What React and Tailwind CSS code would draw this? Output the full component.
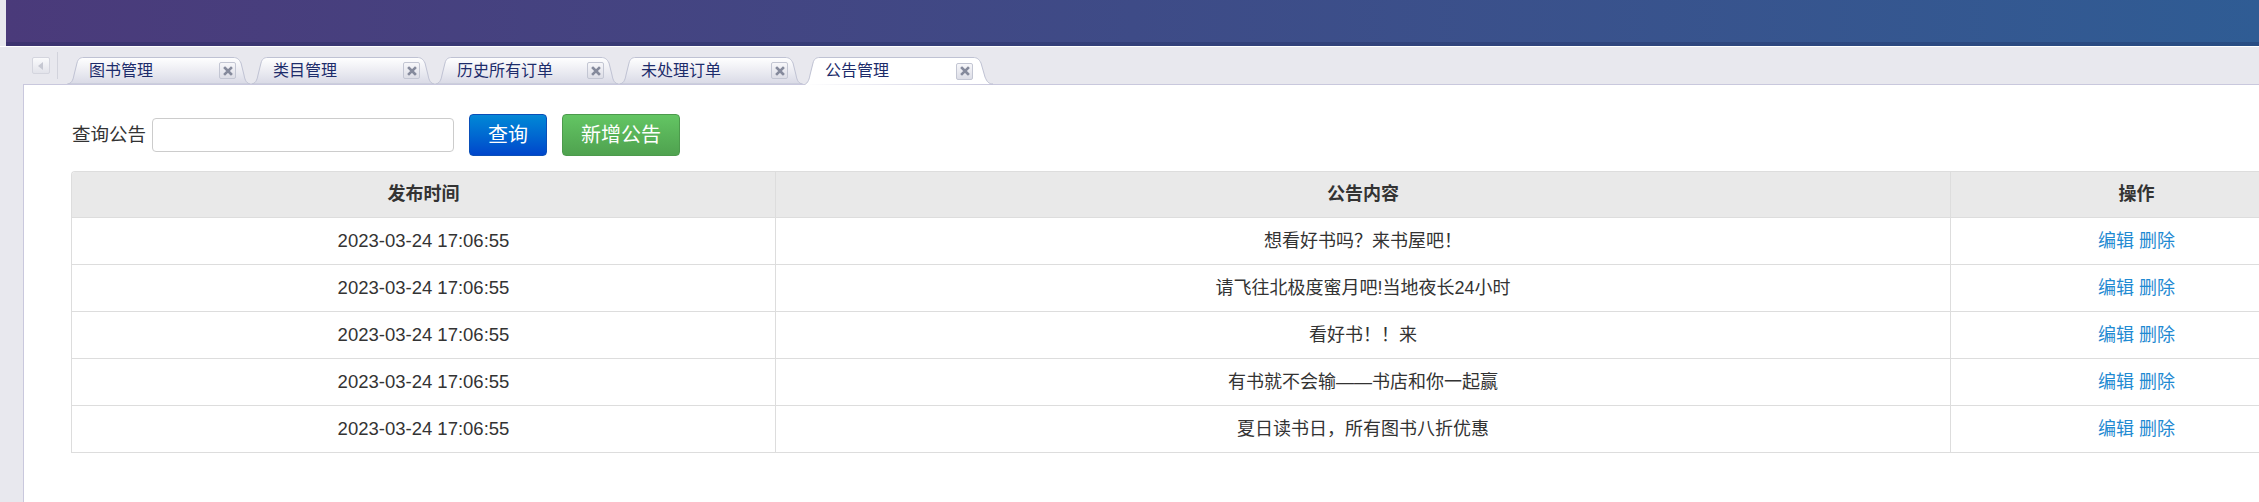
import React from 'react';

const tabs = ['图书管理', '类目管理', '历史所有订单', '未处理订单', '公告管理'];

const notices = [
  '想看好书吗？来书屋吧！',
  '请飞往北极度蜜月吧!当地夜长24小时',
  '看好书！！来',
  '有书就不会输——书店和你一起赢',
  '夏日读书日，所有图书八折优惠',
];

const CloseBox = () => (
  <span className="flex h-[17px] w-[17px] items-center justify-center rounded-[2px] border border-[#c3c6d3] bg-gradient-to-b from-[#f7f7fa] to-[#dcdde6]">
    <svg width="10" height="10" viewBox="0 0 10 10">
      <path d="M2 2 L8 8 M8 2 L2 8" stroke="#858a9c" strokeWidth="2.6" strokeLinecap="square" />
    </svg>
  </span>
);

const Tab = ({ label, active }) => (
  <div className={`relative flex h-[27px] w-[184px] shrink-0 items-center pl-[22px] pr-[15px] ${active ? 'z-10 h-[28px] w-[190px] pr-[20px]' : ''}`}>
    <svg className="absolute inset-0" width={active ? 190 : 184} height={active ? 28 : 27} viewBox={active ? '0 0 190 28' : '0 0 184 27'} preserveAspectRatio="none">
      <defs>
        <linearGradient id={active ? 'tabOn' : 'tabOff'} x1="0" y1="0" x2="0" y2="1">
          <stop offset="0" stopColor="#ffffff" />
          <stop offset="1" stopColor={active ? '#ffffff' : '#d9dae6'} />
        </linearGradient>
      </defs>
      {active ? (
        <path
          d="M0.5,28 C4,27 6,24 7,18 L10,6 C11,2 13,0.5 17,0.5 L170,0.5 C174,0.5 176,2 178,6 L182,20 C184,25 186,27 190,27"
          fill="url(#tabOn)"
          stroke="#bfc2d3"
        />
      ) : (
        <path
          d="M0.5,27 C4,26.5 6,24 7,18 L10,6 C11,2 13,0.5 17,0.5 L166,0.5 C170,0.5 172,2 174,6 L177,18 C178,24 180,26.5 183.5,27 Z"
          fill="url(#tabOff)"
          stroke="#bfc2d3"
        />
      )}
    </svg>
    <span className="relative flex-1 text-[16px] leading-none text-[#1d2c6b]">{label}</span>
    <span className="relative">
      <CloseBox />
    </span>
  </div>
);

export default function App() {
  return (
    <div
      className="h-[502px] w-[2259px] overflow-hidden bg-[#e8e8ee]"
      style={{ fontFamily: '"Liberation Sans", "Noto Sans CJK SC", sans-serif' }}
    >
      <div className="ml-[6px] h-[46px] bg-gradient-to-r from-[#4a3a7a] via-[#3e4b87] to-[#2f5c94] shadow-[inset_0_-4px_0_rgba(20,30,80,0.25)]" />
      <div className="h-px bg-white" />

      <div className="flex h-[37px] items-end pl-[32px]">
        <div className="mb-[5px] flex items-center">
          <span className="flex h-[17px] w-[18px] items-center justify-center rounded-[2px] border border-[#d4d5de] bg-gradient-to-b from-[#fafafc] to-[#e2e3ea]">
            <svg width="6" height="8" viewBox="0 0 6 8">
              <path d="M5 0 L0 4 L5 8 Z" fill="#c6c8d2" />
            </svg>
          </span>
          <span className="ml-[7px] h-[27px] w-px bg-[#d2d3dc]" />
        </div>
        <div className="relative -mb-px ml-[9px] flex">
          {tabs.map((t) => (
            <Tab key={t} label={t} active={t === '公告管理'} />
          ))}
        </div>
      </div>

      <div className="ml-[23px] h-full border-l border-t border-[#c9c8dd] bg-white pl-[47px]">
        <div className="flex items-center pt-[29px]">
          <span className="pl-px text-[18.5px] text-[#333]">查询公告</span>
          <input
            type="text"
            className="ml-[6px] h-[34px] w-[302px] rounded-[4px] border border-[#cccccc] px-2 text-[16px] outline-none"
          />
          <button className="ml-[15px] h-[42px] w-[78px] rounded-[4px] border border-[#0a4fb8] bg-gradient-to-b from-[#0888d6] to-[#0045cb] text-[20px] text-white">
            查询
          </button>
          <button className="ml-[15px] h-[42px] w-[118px] rounded-[4px] border border-[#4c9a4c] bg-gradient-to-b from-[#63c563] to-[#4fa24f] text-[20px] text-white">
            新增公告
          </button>
        </div>

        <div className="mt-[15px] w-[2252px] overflow-hidden rounded-tl-[4px] border-l border-t border-[#dddddd] text-[18px] text-[#333]">
          <div className="grid grid-cols-[703px_1175px_372px] bg-[#e9e9e9] font-bold">
            <div className="flex h-[46px] items-center justify-center border-b border-[#dddddd]">发布时间</div>
            <div className="flex h-[46px] items-center justify-center border-b border-l border-[#dddddd]">公告内容</div>
            <div className="flex h-[46px] items-center justify-center border-b border-l border-[#dddddd]">操作</div>
          </div>
          {notices.map((n, i) => (
            <div key={i} className="grid grid-cols-[703px_1175px_372px]">
              <div className="flex h-[47px] items-center justify-center border-b border-[#dddddd] text-[18.5px]">2023-03-24 17:06:55</div>
              <div className="flex h-[47px] items-center justify-center border-b border-l border-[#dddddd]">{n}</div>
              <div className="flex h-[47px] items-center justify-center gap-[5px] border-b border-l border-[#dddddd] text-[#1f8ad2]">
                <span>编辑</span>
                <span>删除</span>
              </div>
            </div>
          ))}
        </div>
      </div>
    </div>
  );
}
